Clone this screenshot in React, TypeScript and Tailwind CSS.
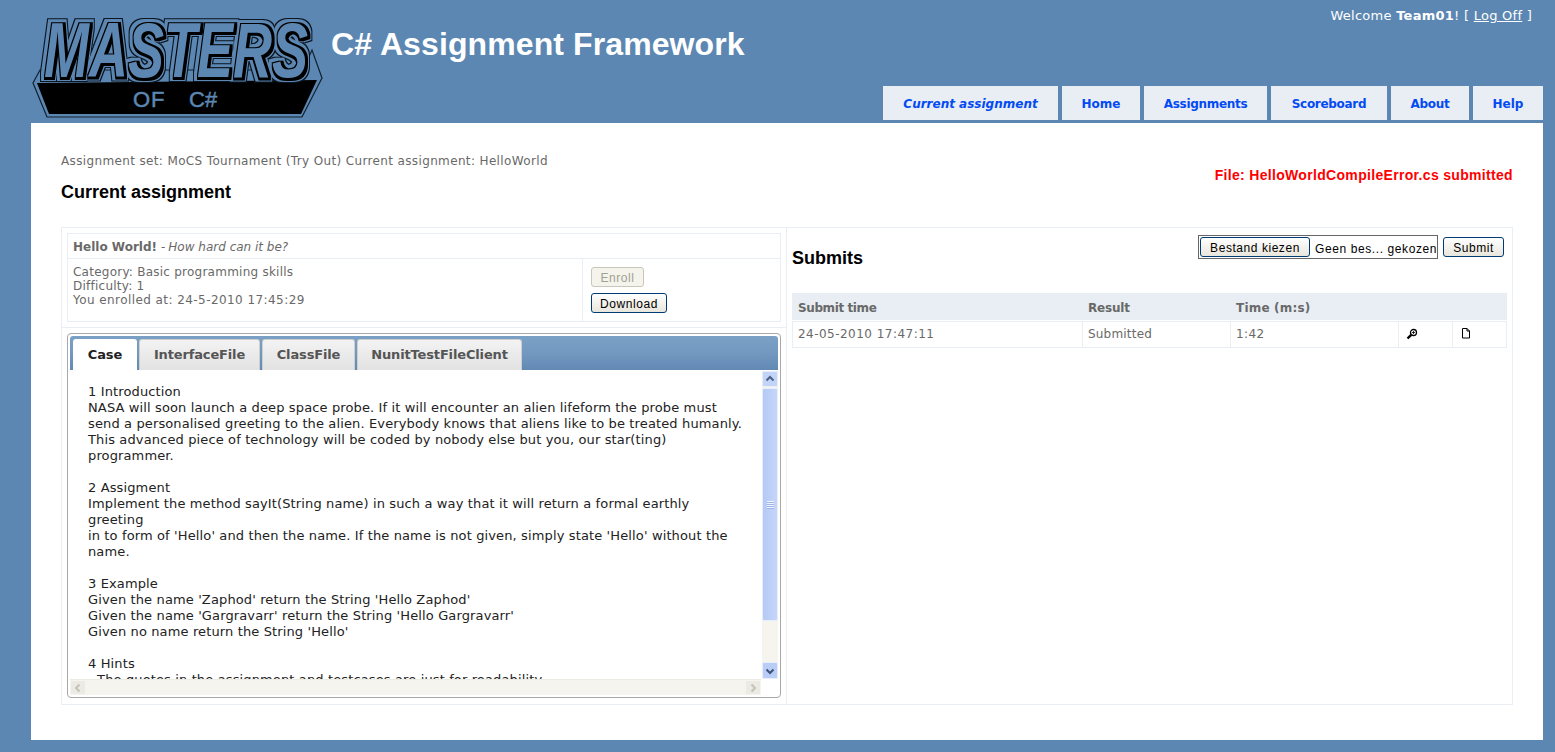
const verdana = "font-['DejaVu_Sans',Verdana,sans-serif]";

function Logo() {
  return (
    <svg width="292" height="102" viewBox="0 0 292 102" className="block shrink-0">
      <defs>
        <filter id="mastersOutline" x="-10%" y="-20%" width="120%" height="140%" colorInterpolationFilters="sRGB">
          <feMorphology in="SourceAlpha" operator="dilate" radius="4.6" result="d1" />
          <feFlood floodColor="#0b1622" result="black1" />
          <feComposite in="black1" in2="d1" operator="in" result="outer" />
          <feMorphology in="SourceAlpha" operator="dilate" radius="3.8" result="d2" />
          <feFlood floodColor="#5c87b2" result="blue1" />
          <feComposite in="blue1" in2="d2" operator="in" result="mid" />
          <feMorphology in="SourceAlpha" operator="dilate" radius="1.6" result="d3" />
          <feOffset in="d3" dx="0.8" dy="0.8" result="d3o" />
          <feFlood floodColor="#000000" result="black2" />
          <feComposite in="black2" in2="d3o" operator="in" result="inner" />
          <feMorphology in="SourceAlpha" operator="dilate" radius="0.4" result="d4" />
          <feFlood floodColor="#5c87b2" result="blue2" />
          <feComposite in="blue2" in2="d4" operator="in" result="fillLetter" />
          <feMerge>
            <feMergeNode in="outer" />
            <feMergeNode in="mid" />
            <feMergeNode in="inner" />
            <feMergeNode in="fillLetter" />
          </feMerge>
        </filter>
      </defs>
      <g transform="translate(-32,-16)">
        <path d="M33 83 L47 117 L302 117 L322 78 L312 50 L303 70 L40 70 Z" fill="#5c87b2" stroke="#10202e" strokeWidth="1.2" />
        <path d="M37 83 L317 80 L301 114 L49 114 Z" fill="#000" />
        <text
          x="44"
          y="77"
          fontFamily="'Liberation Sans', sans-serif"
          fontWeight={700}
          fontStyle="italic"
          fontSize="77"
          textLength="264"
          lengthAdjust="spacingAndGlyphs"
          fill="#5c87b2"
          filter="url(#mastersOutline)"
        >
          MASTERS
        </text>
        <text x="133" y="107" fill="#5c87b2" stroke="#5c87b2" strokeWidth="0.5" fontFamily="'Liberation Sans', sans-serif" fontSize="22" letterSpacing="1">OF</text>
        <text x="189" y="107" fill="#5c87b2" stroke="#5c87b2" strokeWidth="0.5" fontFamily="'Liberation Sans', sans-serif" fontSize="22">C#</text>
      </g>
    </svg>
  );
}

function NavTab({ label, w, italic, track }: { label: string; w: string; italic?: boolean; track?: boolean }) {
  return (
    <a className={`${w} h-[34px] pt-px flex items-center justify-center bg-[#e8eef4] text-[#034af3] text-[12px] font-bold ${italic ? "italic" : ""} ${track ? "tracking-[-0.3px]" : ""}`}>
      {label}
    </a>
  );
}

function XpButton({ label, className, disabled }: { label: string; className: string; disabled?: boolean }) {
  return (
    <div
      className={`${className} h-[20px] pt-px flex items-center justify-center rounded-[3px] border text-[12px] font-['Liberation_Sans',sans-serif] tracking-[0.55px] ${
        disabled
          ? "border-[#c9c7ba] bg-[#f4f3ec] text-[#a1a192]"
          : "border-[#003c74] bg-gradient-to-b from-white to-[#e8e6dc] text-black"
      }`}
    >
      {label}
    </div>
  );
}

function Chevron({ dir, color }: { dir: "up" | "down" | "left" | "right"; color: string }) {
  const d = {
    up: "M2.5 7.5 L6 4 L9.5 7.5",
    down: "M2.5 4.5 L6 8 L9.5 4.5",
    left: "M7.5 2.5 L4 6 L7.5 9.5",
    right: "M4.5 2.5 L8 6 L4.5 9.5",
  }[dir];
  return (
    <svg width="12" height="12" viewBox="0 0 12 12">
      <path d={d} fill="none" stroke={color} strokeWidth="2" />
    </svg>
  );
}

function PanelTab({ label, w, active }: { label: string; w: string; active?: boolean }) {
  return (
    <div
      className={`${w} h-[31px] flex items-center justify-center rounded-t-[3px] text-[13px] font-bold tracking-[-0.15px] ${
        active
          ? "bg-white text-[#222]"
          : "bg-gradient-to-b from-[#f3f3f3] to-[#e2e2e2] text-[#555] border-t border-x border-[#cfcfcf]"
      }`}
    >
      {label}
    </div>
  );
}

function Cell({ w, children, border = true }: { w: string; children?: React.ReactNode; border?: boolean }) {
  return (
    <div className={`${w} h-full pb-[2px] flex items-center pl-[5px] ${border ? "border-r border-[#e8eef4]" : ""}`}>{children}</div>
  );
}

const caseText = `1 Introduction
NASA will soon launch a deep space probe. If it will encounter an alien lifeform the probe must
send a personalised greeting to the alien. Everybody knows that aliens like to be treated humanly.
This advanced piece of technology will be coded by nobody else but you, our star(ting)
programmer.

2 Assigment
Implement the method sayIt(String name) in such a way that it will return a formal earthly
greeting
in to form of 'Hello' and then the name. If the name is not given, simply state 'Hello' without the
name.

3 Example
Given the name 'Zaphod' return the String 'Hello Zaphod'
Given the name 'Gargravarr' return the String 'Hello Gargravarr'
Given no name return the String 'Hello'

4 Hints
- The quotes in the assignment and testcases are just for readability`;

export default function App() {
  return (
    <div className={`h-[752px] overflow-hidden bg-[#5c87b2] text-[12px] ${verdana}`}>
      <header className="h-[123px] flex items-start">
        <div className="ml-[32px] mt-[16px]">
          <Logo />
        </div>
        <h1 className="ml-[7px] mt-[25px] text-[32px] leading-[38px] font-bold text-white font-['Liberation_Sans',sans-serif] tracking-[0.1px] whitespace-nowrap">
          C# Assignment Framework
        </h1>
        <div className="ml-auto h-full flex flex-col items-end justify-between pr-[12px] pb-[3px]">
          <div className="pt-[8px] pr-[11px] text-[13px] tracking-[0.26px] text-white leading-[15px] whitespace-nowrap">
            Welcome <b>Team01</b>! [ <span className="underline">Log Off</span> ]
          </div>
          <nav className="flex gap-[4px]">
            <NavTab label="Current assignment" w="w-[175px]" italic />
            <NavTab label="Home" w="w-[78px]" />
            <NavTab label="Assignments" w="w-[123px]" track />
            <NavTab label="Scoreboard" w="w-[116px]" track />
            <NavTab label="About" w="w-[78px]" track />
            <NavTab label="Help" w="w-[70px]" />
          </nav>
        </div>
      </header>

      <main className="ml-[31px] mr-[12px] h-[617px] bg-white px-[30px]">
        <div className="h-[104px] flex justify-between">
          <div>
            <div className="pt-[31px] leading-[15px] tracking-[0.36px] text-[#696969] whitespace-nowrap">
              Assignment set: MoCS Tournament (Try Out) Current assignment: HelloWorld
            </div>
            <h2 className="mt-[12px] text-[18px] leading-[22px] font-bold text-black font-['Liberation_Sans',sans-serif]">
              Current assignment
            </h2>
          </div>
          <div className="pt-[44px] text-[14px] leading-[16px] tracking-[0.32px] font-bold text-[#ff0000] font-['Liberation_Sans',sans-serif] whitespace-nowrap">
            File: HelloWorldCompileError.cs submitted
          </div>
        </div>

        <div className="h-[478px] border border-[#e8eef4] flex">
          {/* Left cell */}
          <section className="w-[725px] shrink-0 border-r border-[#e8eef4] flex flex-col">
            <div className="h-[100px] shrink-0 pt-[5px] px-[5px] border-b border-[#e8eef4]">
              <div className="h-[89px] border border-[#e8eef4] text-[#696969]">
                <div className="h-[25px] pt-[2px] border-b border-[#e8eef4] flex items-center px-[5px]">
                  <b>Hello World!</b>
                  <span className="ml-[4px]">-</span>
                  <i className="ml-[3px]">How hard can it be?</i>
                </div>
                <div className="h-[62px] flex">
                  <div className="w-[515px] border-r border-[#e8eef4] pl-[5px] pt-[6px] leading-[14px]">
                    <div className="tracking-[0.24px]">Category: Basic programming skills</div>
                    <div className="tracking-[0.24px]">Difficulty: 1</div>
                    <div className="tracking-[0.43px]">You enrolled at: 24-5-2010 17:45:29</div>
                  </div>
                  <div className="flex-1 pl-[8px] pt-[8px] flex flex-col items-start gap-[6px]">
                    <XpButton label="Enroll" className="w-[53px]" disabled />
                    <XpButton label="Download" className="w-[76px]" />
                  </div>
                </div>
              </div>
            </div>

            <div className="pt-[5px] px-[5px]">
              <div className="w-[714px] h-[365px] border border-[#a8a8a8] rounded-[4px] p-[2px] flex flex-col">
                <div className="h-[34px] shrink-0 rounded-t-[3px] bg-gradient-to-b from-[#7ba0c6] via-[#7399c0] to-[#6289b4] flex items-end gap-[2px] pl-[3px]">
                  <PanelTab label="Case" w="w-[64px]" active />
                  <PanelTab label="InterfaceFile" w="w-[121px]" />
                  <PanelTab label="ClassFile" w="w-[93px]" />
                  <PanelTab label="NunitTestFileClient" w="w-[165px]" />
                </div>
                <div className="flex-1 min-h-0 flex flex-col">
                  <div className="h-[308px] flex mt-[1px]">
                    <div className="flex-1 overflow-hidden pl-[18px] pt-[13px] text-[13px] tracking-[0.13px] leading-[16px] text-[#222] whitespace-pre">
                      {caseText}
                    </div>
                    <div className="w-[16px] shrink-0 bg-[#f5f4ee] flex flex-col">
                      <div className="h-[16px] shrink-0 rounded-[2px] border border-[#e6edfb] bg-[#c2d4f8] flex items-center justify-center">
                        <Chevron dir="up" color="#4d6185" />
                      </div>
                      <div className="h-[233px] mt-[1px] rounded-[2px] border border-[#e6edfb] bg-gradient-to-r from-[#b4c9f5] to-[#c6d6f9] flex items-center justify-center">
                        <div className="w-[7px] h-[8px] bg-[repeating-linear-gradient(#eef3fe_0_1px,#9fb6e6_1px_2px)]" />
                      </div>
                      <div className="flex-1" />
                      <div className="h-[17px] shrink-0 rounded-[2px] border border-[#e6edfb] bg-[#b9cdf7] flex items-center justify-center">
                        <Chevron dir="down" color="#3f5378" />
                      </div>
                    </div>
                  </div>
                  <div className="h-[16px] flex">
                    <div className="flex-1 flex bg-[#f5f4ee] border-t border-[#ecebe3] mr-[17px]">
                      <div className="w-[16px] h-full bg-[#ecebe3] border border-[#f5f5f0] rounded-[2px] flex items-center justify-center">
                        <Chevron dir="left" color="#c4c3b8" />
                      </div>
                      <div className="flex-1" />
                      <div className="w-[16px] h-full bg-[#ecebe3] border border-[#f5f5f0] rounded-[2px] flex items-center justify-center">
                        <Chevron dir="right" color="#c4c3b8" />
                      </div>
                    </div>
                  </div>
                </div>
              </div>
            </div>
          </section>

          {/* Right cell */}
          <section className="flex-1 pl-[5px] pr-[5px] text-[#696969]">
            <div className="h-[65px] flex justify-between">
              <h2 className="pt-[19px] text-[18px] leading-[22px] font-bold text-black font-['Liberation_Sans',sans-serif]">
                Submits
              </h2>
              <div className="flex pt-[7px] pr-[3px] items-start">
                <div className="w-[240px] h-[24px] border border-[#666] flex items-center pl-[1px]">
                  <XpButton label="Bestand kiezen" className="w-[110px] shrink-0" />
                  <span className="ml-[5px] mt-[4px] text-black font-['Liberation_Sans',sans-serif] tracking-[0.6px] whitespace-nowrap">
                    Geen bes... gekozen
                  </span>
                </div>
                <XpButton label="Submit" className="ml-[5px] mt-[2px] w-[61px]" />
              </div>
            </div>

            <div className="w-[715px]">
              <div className="h-[27px] pt-[2px] bg-[#e8eef4] flex items-center font-bold">
                <div className="w-[290px] pl-[6px] tracking-[-0.4px]">Submit time</div>
                <div className="w-[148px] pl-[6px] tracking-[-0.2px]">Result</div>
                <div className="pl-[6px] tracking-[0.2px]">Time (m:s)</div>
              </div>
              <div className="h-[27px] mt-px border border-[#e8eef4] flex items-center">
                <Cell w="w-[290px]"><span className="tracking-[0.47px]">24-05-2010 17:47:11</span></Cell>
                <Cell w="w-[148px]"><span className="tracking-[0.2px]">Submitted</span></Cell>
                <Cell w="w-[168px]"><span className="tracking-[0.4px]">1:42</span></Cell>
                <Cell w="w-[54px]">
                  <svg width="12" height="12" viewBox="0 0 12 12" className="ml-[2px]">
                    <circle cx="7.5" cy="4.5" r="3" fill="#fff" stroke="#000" strokeWidth="1.3" />
                    <path d="M5.2 6.8 L1.5 10.5" stroke="#000" strokeWidth="2.4" />
                    <path d="M6 4.5 H9 M7.5 3 V6" stroke="#000" strokeWidth="0.8" />
                  </svg>
                </Cell>
                <Cell w="flex-1" border={false}>
                  <svg width="10" height="11" viewBox="0 0 10 11" className="ml-[3px]">
                    <path d="M1.5 0.5 H6 L8.5 3 V10 H1.5 Z" fill="#fff" stroke="#000" strokeWidth="1" />
                    <path d="M6 0.5 V3 H8.5" fill="none" stroke="#000" strokeWidth="1" />
                  </svg>
                </Cell>
              </div>
            </div>
          </section>
        </div>
      </main>
    </div>
  );
}
